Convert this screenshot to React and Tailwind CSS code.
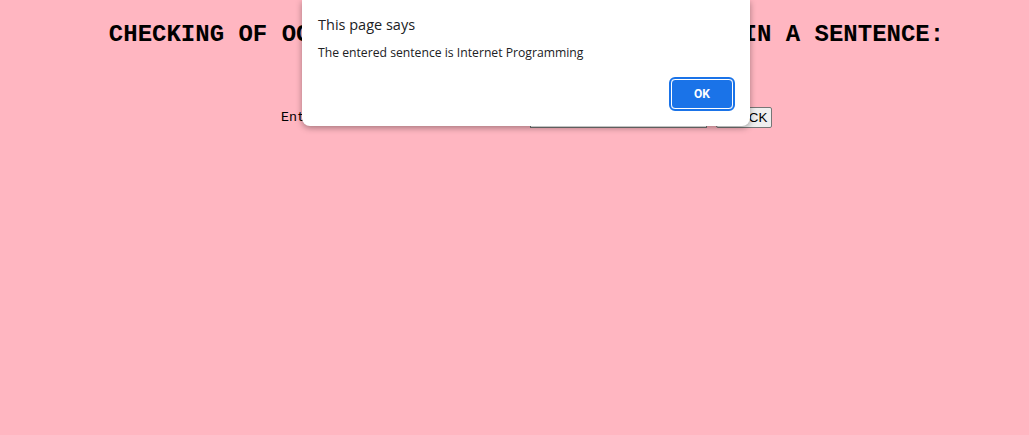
export default function App() {
  return (
    <div className="relative h-[435px] w-full overflow-hidden bg-[#ffb6c1]">
      <div className="pl-[24px] text-center text-black" style={{ fontFamily: '"Liberation Mono", "Courier New", monospace' }}>
        <h2 className="pt-[21px] text-[24px] font-bold leading-[27px]">
          CHECKING OF OCCURRENCE OF A PARTICULAR WORD IN A SENTENCE:
        </h2>
        <div className="mt-[59px] flex items-center justify-center text-[13.33px]">
          <span className="inline-block w-[249px] text-left">Enter the sentence :</span>
          <input
            type="text"
            className="h-[21px] w-[177px] border border-[#767676] bg-white px-[2px]"
          />
          <button
            className="ml-[9px] h-[21px] w-[56px] rounded-[2px] border border-[#767676] bg-[#efefef] text-[13.33px]"
            style={{ fontFamily: '"Liberation Sans", Arial, sans-serif' }}
          >
            CHECK
          </button>
        </div>
      </div>

      <div
        className="absolute left-[302px] top-0 h-[126px] w-[448px] rounded-b-[8px] bg-white shadow-[0_2px_6px_rgba(0,0,0,0.35)]"
        style={{ fontFamily: '"Open Sans", "Noto Sans", sans-serif' }}
      >
        <div className="px-[16px] pt-[15px] text-[14.5px] leading-[20px] text-[#202124]">This page says</div>
        <div className="mt-[10px] px-[16px] text-[12.2px] leading-[16px] text-[#202124]">
          The entered sentence is Internet Programming
        </div>
        <div className="mt-[18px] flex justify-end pr-[17px]">
          <button className="flex h-[30px] w-[62px] items-center justify-center rounded-[4px] border border-white bg-[#1a73e8] text-[12px] font-bold text-white outline-2 outline-[#1a73e8]" style={{ fontFamily: '"Roboto", "Noto Sans", sans-serif' }}>
            OK
          </button>
        </div>
      </div>
    </div>
  );
}
